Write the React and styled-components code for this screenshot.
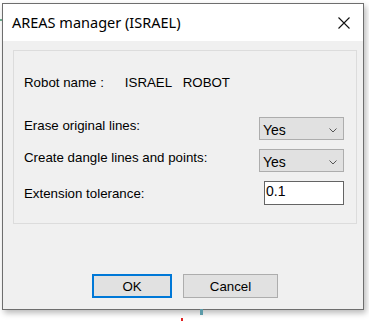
import React from "react";
import styled, { createGlobalStyle } from "styled-components";

const Global = createGlobalStyle`
  html, body { margin: 0; padding: 0; background: #ffffff; }
  #root { width: 369px; height: 321px; overflow: hidden; }
`;

const Page = styled.div`
  position: relative;
  width: 369px;
  height: 321px;
  box-sizing: border-box;
  padding: 3px 0 0 2px;
  background: #ffffff;
  font-family: "Liberation Sans", Arial, sans-serif;
`;

const Dialog = styled.div`
  width: 362px;
  height: 307px;
  box-sizing: border-box;
  border: 1px solid #6e6e6e;
  background: #f0f0f0;
  display: flex;
  flex-direction: column;
  box-shadow: 2px 3px 6px rgba(0, 0, 0, 0.28);
`;

const TitleBar = styled.div`
  height: 37px;
  flex: none;
  background: #ffffff;
  display: flex;
  align-items: center;
  justify-content: space-between;
  padding: 0 13px 0 9px;
`;

const Title = styled.span`
  font-family: "Noto Sans", "Open Sans", sans-serif;
  font-size: 14.5px;
  color: #000;
  padding-bottom: 1px;
`;

const CloseIcon = styled.svg`
  width: 12px;
  height: 12px;
  display: block;
`;

const Body = styled.div`
  flex: 1;
  display: flex;
  flex-direction: column;
  padding: 9px 6px 0 10px;
`;

const Group = styled.div`
  height: 174px;
  box-sizing: border-box;
  border: 1px solid #dcdcdc;
  padding: 20px 12px 0 10px;
  display: flex;
  flex-direction: column;
`;

const Row = styled.div`
  height: 23px;
  display: flex;
  align-items: center;
  justify-content: space-between;
  margin-top: ${(p) => p.$gap}px;
`;

const Label = styled.span`
  font-size: 13.3px;
  color: #000;
  white-space: pre;
  padding-bottom: ${(p) => p.$lift || 0}px;
  padding-top: ${(p) => p.$drop || 0}px;
`;

const NameRow = styled.div`
  height: 23px;
  display: flex;
  align-items: center;
  font-size: 13.3px;
  color: #000;
`;

const NameValue = styled.span`
  white-space: pre;
  margin-left: 21px;
  font-size: 13.3px;
`;

const Select = styled.div`
  width: 85px;
  height: 23px;
  box-sizing: border-box;
  border: 1px solid #adadad;
  background: #e1e1e1;
  display: flex;
  align-items: center;
  justify-content: space-between;
  padding: 2px 6px 0 3px;
  font-size: 14px;
  color: #000;
`;

const Chevron = styled.svg`
  width: 8px;
  height: 5px;
  display: block;
  margin-top: 1px;
`;

const Input = styled.div`
  width: 80px;
  height: 24px;
  box-sizing: border-box;
  border: 1px solid #646464;
  background: #ffffff;
  display: flex;
  align-items: center;
  padding: 0 0 3px 1px;
  font-size: 14px;
  color: #000;
`;

const Buttons = styled.div`
  display: flex;
  justify-content: center;
  gap: 11px;
  margin-top: 50px;
  padding-left: 0px;
`;

const Button = styled.div`
  width: ${(p) => p.$w}px;
  height: 24px;
  box-sizing: border-box;
  border: ${(p) => (p.$default ? "2px solid #0078d7" : "1px solid #adadad")};
  background: #e1e1e1;
  display: flex;
  align-items: center;
  justify-content: center;
  font-size: 13.3px;
  color: #000;
`;

const Mark = styled.div`
  position: absolute;
  left: ${(p) => p.$x}px;
  top: ${(p) => p.$y}px;
  width: ${(p) => p.$w}px;
  height: ${(p) => p.$h}px;
  background: ${(p) => p.$c};
`;

export default function App() {
  return (
    <>
      <Global />
      <Page>
        <Mark $x={0} $y={19} $w={2} $h={2} $c="#6aa88a" />
        <Mark $x={200} $y={309} $w={3} $h={6} $c="#5b9aa8" />
        <Mark $x={181} $y={318} $w={2} $h={3} $c="#e02020" />
        <Dialog>
          <TitleBar>
            <Title>AREAS manager (ISRAEL)</Title>
            <CloseIcon viewBox="0 0 12 12">
              <path d="M0.5 0.5 L11.5 11.5 M11.5 0.5 L0.5 11.5" stroke="#111" strokeWidth="1.1" fill="none" />
            </CloseIcon>
          </TitleBar>
          <Body>
            <Group>
              <NameRow>
                <Label>Robot name :</Label>
                <NameValue>{"ISRAEL   ROBOT"}</NameValue>
              </NameRow>
              <Row $gap={23}>
                <Label $lift={6}>Erase original lines:</Label>
                <Select>
                  <span>Yes</span>
                  <Chevron viewBox="0 0 8 5">
                    <path d="M0.5 0.5 L4 4 L7.5 0.5" stroke="#555" strokeWidth="1" fill="none" />
                  </Chevron>
                </Select>
              </Row>
              <Row $gap={9}>
                <Label $lift={7}>Create dangle lines and points:</Label>
                <Select>
                  <span>Yes</span>
                  <Chevron viewBox="0 0 8 5">
                    <path d="M0.5 0.5 L4 4 L7.5 0.5" stroke="#555" strokeWidth="1" fill="none" />
                  </Chevron>
                </Select>
              </Row>
              <Row $gap={9}>
                <Label $drop={1}>Extension tolerance:</Label>
                <Input>0.1</Input>
              </Row>
            </Group>
            <Buttons>
              <Button $w={80} $default>OK</Button>
              <Button $w={95}>Cancel</Button>
            </Buttons>
          </Body>
        </Dialog>
      </Page>
    </>
  );
}
